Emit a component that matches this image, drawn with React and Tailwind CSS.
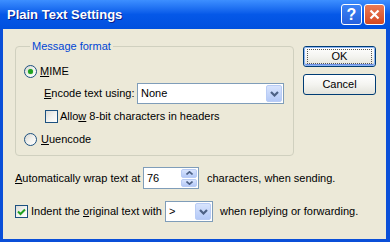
import React from 'react';

const Chevron = ({ up = false, small = false }) => (
    <svg width={small ? 7 : 9} height={small ? 4 : 6} viewBox={small ? '0 0 7 4' : '0 0 9 6'} className={up ? 'rotate-180' : ''}>
        {small
            ? <path d="M0.5 0.5 L3.5 3.2 L6.5 0.5" stroke="#4D6185" strokeWidth="1.6" fill="none" />
            : <path d="M1 1 L4.5 4.5 L8 1" stroke="#4D6185" strokeWidth="2.2" fill="none" />}
    </svg>
);

const DropButton = () => (
    <div className="w-[16px] h-[17px] mr-[1px] rounded-[2px] border border-[#B9CCF5] bg-gradient-to-b from-[#D8E4FD] to-[#B4C9F7] flex items-center justify-center">
        <Chevron />
    </div>
);

const Radio = ({ checked }) => (
    <div className="w-[13px] h-[13px] rounded-full border border-[#1C5180] bg-gradient-to-br from-[#D6D5CE] via-[#F2F2EE] to-white flex items-center justify-center shrink-0">
        {checked && <div className="w-[5px] h-[5px] rounded-full bg-[#21A121] shadow-[0_0_1px_#5BCF5B]" />}
    </div>
);

const Checkbox = ({ checked }) => (
    <div className="w-[13px] h-[13px] border border-[#1C5180] bg-gradient-to-br from-[#DCDCD7] via-[#F2F2EE] to-white flex items-center justify-center shrink-0">
        {checked && (
            <svg width="9" height="8" viewBox="0 0 9 8">
                <path d="M1 3.5 L3.5 6 L8 1.5" stroke="#21A121" strokeWidth="2" fill="none" />
            </svg>
        )}
    </div>
);

const XpButton = ({ children, isDefault }) => (
    <div className="w-[73px] h-[21px] rounded-[3px] border border-[#003C74] bg-gradient-to-b from-white via-[#F4F4F0] to-[#E3E3DB] flex items-center justify-center">
        <div className={`w-full h-full rounded-[2px] flex items-center justify-center ${isDefault ? 'border border-[#8CB4F2] shadow-[inset_0_-1px_0_#6C8FE6]' : ''}`}>
            <div className={`flex items-center justify-center ${isDefault ? 'w-[65px] h-[15px] border border-dotted border-[#555]' : ''}`}>
                {children}
            </div>
        </div>
    </div>
);

const U = ({ children }) => <span className="underline underline-offset-[1px]">{children}</span>;

export default function App() {
    return (
        <div className="w-[390px] h-[242px] bg-[#0A4FD8] flex flex-col overflow-hidden font-['Liberation_Sans',Arial,sans-serif]">
            {/* title bar */}
            <div className="h-[29px] shrink-0 flex items-center pl-[7px] pr-[5px] bg-gradient-to-b from-[#3D8FFF] via-[#0558E8] to-[#0050DE]">
                <span className="text-white font-bold text-[13px] [text-shadow:1px_1px_0_#0A1E8C] pt-[1px]">Plain Text Settings</span>
                <div className="ml-auto flex gap-[2px]">
                    <div className="w-[21px] h-[21px] rounded-[3px] border border-white bg-gradient-to-b from-[#3C83F5] to-[#2560DE] flex items-center justify-center text-white font-bold text-[16px] leading-none">?</div>
                    <div className="w-[21px] h-[21px] rounded-[3px] border border-white bg-gradient-to-b from-[#E97A55] to-[#D4471F] flex items-center justify-center">
                        <svg width="11" height="11" viewBox="0 0 11 11">
                            <path d="M1.5 1.5 L9.5 9.5 M9.5 1.5 L1.5 9.5" stroke="white" strokeWidth="2.2" />
                        </svg>
                    </div>
                </div>
            </div>

            {/* client area */}
            <div className="flex-1 ml-[3px] mr-[4px] mb-[3px] bg-[#ECE9D8] pl-[12px] pt-[10px] text-[11px] leading-[13px] text-black">
                <div className="flex">
                    <fieldset className="w-[279px] border border-[#D0D0BF] rounded-[4px] pl-[8px] pb-[9px]">
                        <legend className="ml-[6px] px-[2px] text-[#0046D5] leading-[14px]">Message format</legend>
                        <div className="mt-[12px] h-[13px] flex items-center">
                            <Radio checked />
                            <span className="ml-[3px]"><U>M</U>IME</span>
                        </div>
                        <div className="mt-[5px] h-[21px] flex items-center pl-[20px]">
                            <span className="w-[93px]"><U>E</U>ncode text using:</span>
                            <div className="w-[147px] h-[21px] border border-[#7F9DB9] bg-white flex items-center">
                                <span className="pl-[3px] flex-1">None</span>
                                <DropButton />
                            </div>
                        </div>
                        <div className="mt-[6px] h-[13px] flex items-center pl-[21px]">
                            <Checkbox />
                            <span className="ml-[2px]">Allo<U>w</U> 8-bit characters in headers</span>
                        </div>
                        <div className="mt-[10px] h-[13px] flex items-center">
                            <Radio />
                            <span className="ml-[4px]"><U>U</U>uencode</span>
                        </div>
                    </fieldset>

                    <div className="ml-[9px] mt-[7px] flex flex-col gap-[7px]">
                        <XpButton isDefault>OK</XpButton>
                        <XpButton>Cancel</XpButton>
                    </div>
                </div>

                <div className="mt-[11px] h-[22px] flex items-center">
                    <span className="w-[128px]"><U>A</U>utomatically wrap text at</span>
                    <div className="w-[56px] h-[22px] border border-[#7F9DB9] bg-white flex">
                        <span className="pl-[3px] pt-[4px] flex-1">76</span>
                        <div className="w-[16px] mr-[1px] my-[1px] flex flex-col gap-[1px]">
                            <div className="flex-1 rounded-[2px] border border-[#B9CCF5] bg-gradient-to-b from-[#D8E4FD] to-[#B4C9F7] flex items-center justify-center">
                                <Chevron up small />
                            </div>
                            <div className="flex-1 rounded-[2px] border border-[#B9CCF5] bg-gradient-to-b from-[#D8E4FD] to-[#B4C9F7] flex items-center justify-center">
                                <Chevron small />
                            </div>
                        </div>
                    </div>
                    <span className="ml-[8px]">characters, when sending.</span>
                </div>

                <div className="mt-[12px] h-[21px] flex items-center">
                    <Checkbox checked />
                    <span className="w-[137px] pl-[3px]">Indent the <U>o</U>riginal text with</span>
                    <div className="w-[48px] h-[21px] border border-[#7F9DB9] bg-white flex items-center">
                        <span className="pl-[3px] flex-1">&gt;</span>
                        <DropButton />
                    </div>
                    <span className="ml-[7px]">when replying or forwarding.</span>
                </div>
            </div>
        </div>
    );
}
